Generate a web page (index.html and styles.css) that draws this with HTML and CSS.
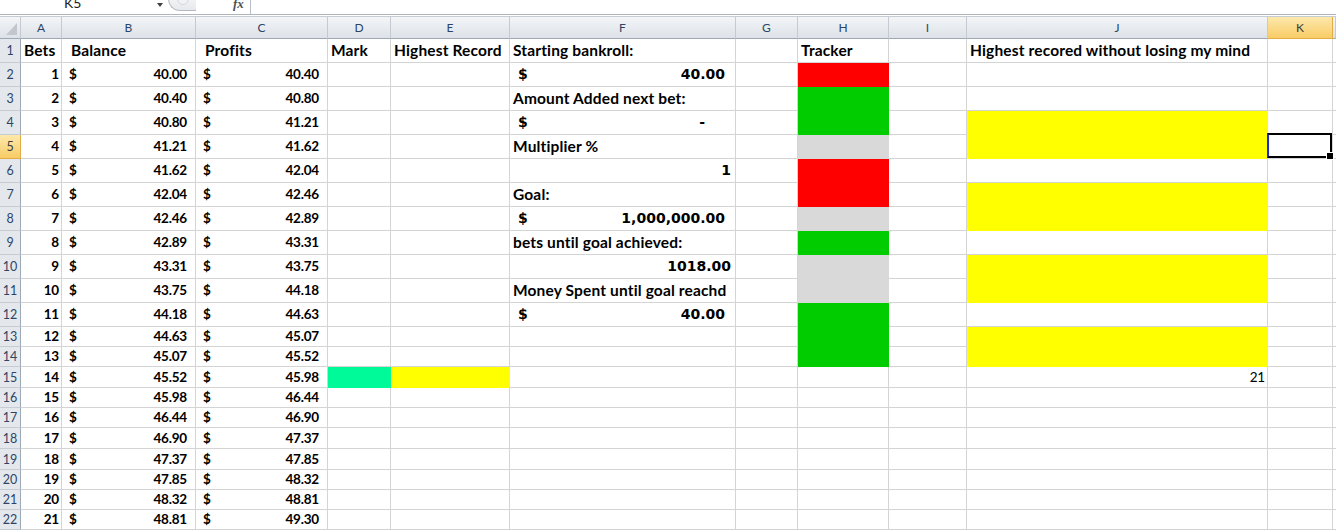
FILE: index.html
```html
<!DOCTYPE html>
<html lang="en">
  <head>
    <meta charset="UTF-8" />
    <meta name="viewport" content="width=device-width, initial-scale=1.0" />
    <title>Bet Tracker</title>
    <link rel="stylesheet" href="styles.css">
  </head>

  <body>
    <!-- formula bar (top of it scrolled off) -->
    <div class="formula-bar">
      <div class="name-box">K5</div>
      <div class="name-arrow"></div>
      <div class="grip"></div>
      <div class="fx">fx</div>
      <div class="formula"></div>
    </div>

    <div class="sheet">
      <div class="row heads">
        <div class="corner">
          <svg width="11" height="12" viewBox="0 0 11 12"><polygon points="11,0 11,12 0,12" fill="#c3c7cd" /></svg>
        </div>
        <div>A</div><div>B</div><div>C</div><div>D</div><div>E</div><div>F</div>
        <div>G</div><div>H</div><div>I</div><div>J</div><div class="on">K</div><div></div>
      </div>

      <div class="row tall">
        <div class="rh">1</div>
        <div>Bets</div>
        <div class="pad">Balance</div>
        <div class="pad">Profits</div>
        <div>Mark</div>
        <div>Highest Record</div>
        <div>Starting bankroll:</div>
        <div></div>
        <div>Tracker</div>
        <div></div>
        <div>Highest recored without losing my mind</div>
        <div></div><div></div>
      </div>

      <div class="row tall">
        <div class="rh">2</div>
        <div class="num">1</div>
        <div class="acct"><span>$</span><span>40.00</span></div>
        <div class="acct"><span>$</span><span>40.40</span></div>
        <div></div><div></div>
        <div class="acct big"><span>$</span><span>40.00</span></div>
        <div></div>
        <div class="red"></div>
        <div></div><div></div><div></div><div></div>
      </div>

      <div class="row tall">
        <div class="rh">3</div>
        <div class="num">2</div>
        <div class="acct"><span>$</span><span>40.40</span></div>
        <div class="acct"><span>$</span><span>40.80</span></div>
        <div></div><div></div>
        <div>Amount Added next bet:</div>
        <div></div>
        <div class="green"></div>
        <div></div><div></div><div></div><div></div>
      </div>

      <div class="row tall">
        <div class="rh">4</div>
        <div class="num">3</div>
        <div class="acct"><span>$</span><span>40.80</span></div>
        <div class="acct"><span>$</span><span>41.21</span></div>
        <div></div><div></div>
        <div class="acct big dash"><span>$</span><span>-</span></div>
        <div></div>
        <div class="green"></div>
        <div></div>
        <div class="yellow"></div>
        <div></div><div></div>
      </div>

      <div class="row tall">
        <div class="rh on">5</div>
        <div class="num">4</div>
        <div class="acct"><span>$</span><span>41.21</span></div>
        <div class="acct"><span>$</span><span>41.62</span></div>
        <div></div><div></div>
        <div>Multiplier %</div>
        <div></div>
        <div class="grey"></div>
        <div></div>
        <div class="yellow"></div>
        <div class="sel"></div>
        <div></div>
      </div>

      <div class="row tall">
        <div class="rh">6</div>
        <div class="num">5</div>
        <div class="acct"><span>$</span><span>41.62</span></div>
        <div class="acct"><span>$</span><span>42.04</span></div>
        <div></div><div></div>
        <div class="num big">1</div>
        <div></div>
        <div class="red"></div>
        <div></div><div></div><div></div><div></div>
      </div>

      <div class="row tall">
        <div class="rh">7</div>
        <div class="num">6</div>
        <div class="acct"><span>$</span><span>42.04</span></div>
        <div class="acct"><span>$</span><span>42.46</span></div>
        <div></div><div></div>
        <div>Goal:</div>
        <div></div>
        <div class="red"></div>
        <div></div>
        <div class="yellow"></div>
        <div></div><div></div>
      </div>

      <div class="row tall">
        <div class="rh">8</div>
        <div class="num">7</div>
        <div class="acct"><span>$</span><span>42.46</span></div>
        <div class="acct"><span>$</span><span>42.89</span></div>
        <div></div><div></div>
        <div class="acct big"><span>$</span><span>1,000,000.00</span></div>
        <div></div>
        <div class="grey"></div>
        <div></div>
        <div class="yellow"></div>
        <div></div><div></div>
      </div>

      <div class="row tall">
        <div class="rh">9</div>
        <div class="num">8</div>
        <div class="acct"><span>$</span><span>42.89</span></div>
        <div class="acct"><span>$</span><span>43.31</span></div>
        <div></div><div></div>
        <div>bets until goal achieved:</div>
        <div></div>
        <div class="green"></div>
        <div></div><div></div><div></div><div></div>
      </div>

      <div class="row tall">
        <div class="rh">10</div>
        <div class="num">9</div>
        <div class="acct"><span>$</span><span>43.31</span></div>
        <div class="acct"><span>$</span><span>43.75</span></div>
        <div></div><div></div>
        <div class="num big">1018.00</div>
        <div></div>
        <div class="grey"></div>
        <div></div>
        <div class="yellow"></div>
        <div></div><div></div>
      </div>

      <div class="row tall">
        <div class="rh">11</div>
        <div class="num">10</div>
        <div class="acct"><span>$</span><span>43.75</span></div>
        <div class="acct"><span>$</span><span>44.18</span></div>
        <div></div><div></div>
        <div>Money Spent until goal reachd</div>
        <div></div>
        <div class="grey"></div>
        <div></div>
        <div class="yellow"></div>
        <div></div><div></div>
      </div>

      <div class="row tall">
        <div class="rh">12</div>
        <div class="num">11</div>
        <div class="acct"><span>$</span><span>44.18</span></div>
        <div class="acct"><span>$</span><span>44.63</span></div>
        <div></div><div></div>
        <div class="acct big"><span>$</span><span>40.00</span></div>
        <div></div>
        <div class="green"></div>
        <div></div><div></div><div></div><div></div>
      </div>

      <div class="row">
        <div class="rh">13</div>
        <div class="num">12</div>
        <div class="acct"><span>$</span><span>44.63</span></div>
        <div class="acct"><span>$</span><span>45.07</span></div>
        <div></div><div></div><div></div><div></div>
        <div class="green"></div>
        <div></div>
        <div class="yellow"></div>
        <div></div><div></div>
      </div>

      <div class="row">
        <div class="rh">14</div>
        <div class="num">13</div>
        <div class="acct"><span>$</span><span>45.07</span></div>
        <div class="acct"><span>$</span><span>45.52</span></div>
        <div></div><div></div><div></div><div></div>
        <div class="green"></div>
        <div></div>
        <div class="yellow"></div>
        <div></div><div></div>
      </div>

      <div class="row mid">
        <div class="rh">15</div>
        <div class="num">14</div>
        <div class="acct"><span>$</span><span>45.52</span></div>
        <div class="acct"><span>$</span><span>45.98</span></div>
        <div class="mint"></div>
        <div class="yellow"></div>
        <div></div><div></div><div></div><div></div>
        <div class="num plain">21</div>
        <div></div><div></div>
      </div>

      <div class="row">
        <div class="rh">16</div>
        <div class="num">15</div>
        <div class="acct"><span>$</span><span>45.98</span></div>
        <div class="acct"><span>$</span><span>46.44</span></div>
        <div></div><div></div><div></div><div></div><div></div><div></div><div></div><div></div><div></div>
      </div>

      <div class="row">
        <div class="rh">17</div>
        <div class="num">16</div>
        <div class="acct"><span>$</span><span>46.44</span></div>
        <div class="acct"><span>$</span><span>46.90</span></div>
        <div></div><div></div><div></div><div></div><div></div><div></div><div></div><div></div><div></div>
      </div>

      <div class="row mid">
        <div class="rh">18</div>
        <div class="num">17</div>
        <div class="acct"><span>$</span><span>46.90</span></div>
        <div class="acct"><span>$</span><span>47.37</span></div>
        <div></div><div></div><div></div><div></div><div></div><div></div><div></div><div></div><div></div>
      </div>

      <div class="row mid">
        <div class="rh">19</div>
        <div class="num">18</div>
        <div class="acct"><span>$</span><span>47.37</span></div>
        <div class="acct"><span>$</span><span>47.85</span></div>
        <div></div><div></div><div></div><div></div><div></div><div></div><div></div><div></div><div></div>
      </div>

      <div class="row">
        <div class="rh">20</div>
        <div class="num">19</div>
        <div class="acct"><span>$</span><span>47.85</span></div>
        <div class="acct"><span>$</span><span>48.32</span></div>
        <div></div><div></div><div></div><div></div><div></div><div></div><div></div><div></div><div></div>
      </div>

      <div class="row">
        <div class="rh">21</div>
        <div class="num">20</div>
        <div class="acct"><span>$</span><span>48.32</span></div>
        <div class="acct"><span>$</span><span>48.81</span></div>
        <div></div><div></div><div></div><div></div><div></div><div></div><div></div><div></div><div></div>
      </div>

      <div class="row">
        <div class="rh">22</div>
        <div class="num">21</div>
        <div class="acct"><span>$</span><span>48.81</span></div>
        <div class="acct"><span>$</span><span>49.30</span></div>
        <div></div><div></div><div></div><div></div><div></div><div></div><div></div><div></div><div></div>
      </div>
    </div>
  </body>
</html>
```

FILE: styles.css
```css
/* Spreadsheet view: formula bar + grid */
* {
  box-sizing: border-box;
}

body {
  margin: 0;
  width: 1336px;
  height: 530px;
  overflow: hidden;
  background: #fff;
  font-family: Lato, "Liberation Sans", sans-serif;
  color: #000;
}

/* only the bottom strip of the formula bar is visible */
.formula-bar {
  display: flex;
  align-items: flex-end;
  height: 15px;
  overflow: hidden;
  border-bottom: 1px solid #aeb5be;
}

.name-box {
  display: flex;
  align-items: flex-end;
  width: 155px;
  height: 22px;
  padding: 0 0 4px 64px;
  font-size: 14px;
  line-height: 15px;
  color: #1e1e1e;
}

.name-arrow {
  width: 0;
  height: 0;
  margin: 0 0 7px 2px;
  border-left: 3.5px solid transparent;
  border-right: 3.5px solid transparent;
  border-top: 4px solid #404040;
}

.grip {
  position: relative;
  width: 28px;
  height: 24px;
  margin: 0 0 3px 5px;
  border: 1px solid #b3b9c1;
  border-right: 0;
  border-radius: 12px 0 0 12px;
  background: linear-gradient(#fdfdfd, #e6e9ed);
}

.grip::after {
  content: "";
  position: absolute;
  left: 8px;
  top: 5px;
  width: 10px;
  height: 10px;
  border-radius: 50%;
  background: #f1f2f4;
  border: 1px solid #d3d7dc;
}

.fx {
  margin: 0 0 5px 37px;
  font-family: "Liberation Serif", serif;
  font-style: italic;
  font-weight: 700;
  font-size: 13px;
  line-height: 11px;
  color: #505050;
}

.formula {
  flex: 1;
  height: 14px;
  margin-left: 6px;
  border-left: 1px solid #b9bfc7;
}

/* grid */
.sheet {
  margin-top: 1px;
  border-top: 1px solid #c6ccd4;
}

.row {
  display: grid;
  grid-template-columns: 21px 41px 134px 132px 63px 119px 226px 62px 91px 78px 301px 65px 1fr;
  height: 20px;
}

.row.tall {
  height: 24px;
}

.row.mid {
  height: 21px;
}

.row.heads {
  height: 22px;
}

.row > div {
  display: flex;
  align-items: flex-end;
  padding: 0 3px 2px;
  border-right: 1px solid #d4d4d4;
  border-bottom: 1px solid #d4d4d4;
  font-size: 15.5px;
  line-height: 15px;
  font-weight: 700;
  letter-spacing: 0.15px;
  white-space: nowrap;
}

.row.tall > div {
  padding-bottom: 4px;
}

/* column letters */
.row.heads > div {
  justify-content: center;
  padding: 0 0 3px;
  font-size: 12px;
  font-weight: 400;
  letter-spacing: 0;
  color: #2c4566;
  background: linear-gradient(#f3f5f7, #dde2e8);
  border-right-color: #c4cad1;
  border-bottom-color: #9ea9b6;
}

.row.heads > .corner {
  justify-content: flex-end;
  padding: 0 3px 3px 0;
}

/* row numbers */
.row .rh {
  justify-content: center;
  padding-left: 0;
  padding-right: 0;
  font-size: 12.5px;
  font-weight: 400;
  letter-spacing: 0;
  color: #2c4566;
  background: #e4e8ed;
  border-right-color: #9ea9b6;
  border-bottom-color: #c6ccd4;
}

.row.heads > .on,
.row .rh.on {
  background: linear-gradient(#fde8ab, #f8cc66);
  border-right-color: #e5ab45;
  border-bottom-color: #e5ab45;
  color: #3b3b3b;
}

.row .pad {
  padding-left: 9px;
}

/* numbers keep a tighter size, like the narrow digits of the sheet font */
.row .num,
.row .acct {
  font-size: 13.5px;
  letter-spacing: -0.2px;
}

.row .num {
  justify-content: flex-end;
  padding-right: 2px;
}

/* accounting format: $ left, amount right */
.row .acct {
  justify-content: space-between;
  padding-left: 7px;
  padding-right: 8px;
}

.row .big {
  font-family: "DejaVu Sans", sans-serif;
  font-size: 14px;
  letter-spacing: 0;
}

.row .acct.big {
  padding-left: 8px;
  padding-right: 10px;
}

.row .acct.dash {
  padding-right: 30px;
}

.row .num.big {
  padding-right: 4px;
}

.row .plain {
  font-weight: 400;
}

/* fills */
.row .red {
  background: #ff0000;
  border-color: #ff0000;
}

.row .green {
  background: #00cc00;
  border-color: #00cc00;
}

.row .grey {
  background: #d9d9d9;
  border-color: #d9d9d9;
}

.row .yellow {
  background: #ffff00;
  border-color: #ffff00;
}

.row .mint {
  background: #00fa9a;
  border-color: #00fa9a;
}

/* active cell outline with fill handle */
.sel {
  position: relative;
}

.sel::before {
  content: "";
  position: absolute;
  z-index: 1;
  left: -1px;
  top: -2px;
  right: 0;
  bottom: 0;
  border: 2px solid #000;
  border-left-color: #1d2bd6;
}

.sel::after {
  content: "";
  position: absolute;
  z-index: 2;
  right: -2px;
  bottom: -2px;
  width: 6px;
  height: 6px;
  background: #000;
  border: 1px solid #fff;
}
```
